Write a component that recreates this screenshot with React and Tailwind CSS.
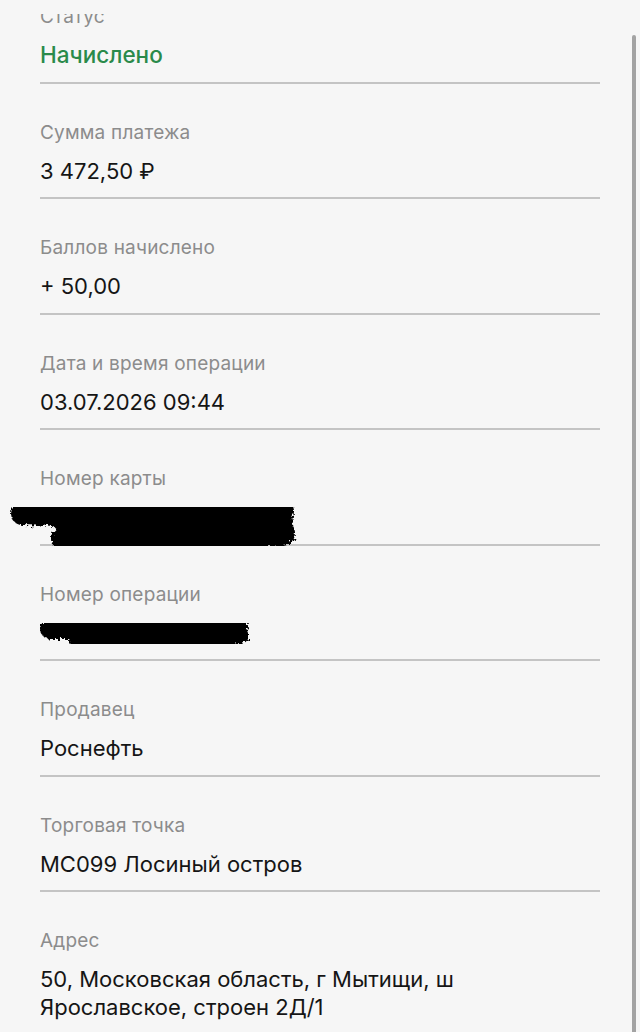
import React from 'react'

const rows = [
  { label: 'Статус', value: 'Начислено', green: true },
  { label: 'Сумма платежа', value: '3 472,50 ₽' },
  { label: 'Баллов начислено', value: '+ 50,00' },
  { label: 'Дата и время операции', value: '03.07.2026 09:44' },
  { label: 'Номер карты', scribble: 'card' },
  { label: 'Номер операции', scribble: 'op' },
  { label: 'Продавец', value: 'Роснефть' },
  { label: 'Торговая точка', value: 'MC099 Лосиный остров' },
  { label: 'Адрес', value: '50, Московская область, г Мытищи, ш Ярославское, строен 2Д/1' },
]

function Scribble({ kind }) {
  if (kind === 'card') {
    return (
      <svg className="absolute left-[-40px] top-[-16px]" width="300" height="80" viewBox="0 0 300 80">
        <defs>
          <filter id="rough1">
            <feTurbulence type="fractalNoise" baseFrequency="0.35" numOctaves="2" seed="3" />
            <feDisplacementMap in="SourceGraphic" scale="8" />
          </filter>
        </defs>
        <g filter="url(#rough1)" stroke="#050505" strokeLinecap="round" fill="none">
          <path d="M22 27 L60 28" strokeWidth="22" />
          <path d="M64 30 L200 28 L280 24" strokeWidth="28" />
          <path d="M64 52 L180 55 L282 46" strokeWidth="26" />
          <path d="M250 36 L284 34" strokeWidth="18" />
        </g>
      </svg>
    )
  }
  return (
    <svg className="absolute left-[-2px] top-[-10px]" width="220" height="52" viewBox="0 0 220 52">
      <defs>
        <filter id="rough2">
          <feTurbulence type="fractalNoise" baseFrequency="0.4" numOctaves="2" seed="7" />
          <feDisplacementMap in="SourceGraphic" scale="7" />
        </filter>
      </defs>
      <g filter="url(#rough2)" stroke="#050505" strokeLinecap="round" fill="none">
        <path d="M12 20 L120 20 L200 16" strokeWidth="20" />
        <path d="M40 32 L150 33 L202 26" strokeWidth="18" />
      </g>
    </svg>
  )
}

export default function App() {
  return (
    <div className="relative h-[1032px] overflow-hidden bg-[#f6f6f6]" style={{ fontFamily: 'Inter, "Noto Sans", sans-serif' }}>
      <div className="mt-[-34px] px-10">
        {rows.map((r, i) => (
          <div key={i} className={(i > 0 ? 'border-t-2 border-[#c4c4c4] ' : 'border-t-2 border-transparent ') + 'pt-[37px] pb-[12.5px]'}>
            <div className="text-[19px] leading-6 text-[#8c8c8c] tracking-[0.2px]">{r.label}</div>
            <div className="mt-[12px]">
              {r.scribble ? (
                <div className="relative h-7"><Scribble kind={r.scribble} /></div>
              ) : r.green ? (
                <div className="text-[22.5px] leading-7 font-medium text-[#2a8a4a]">{r.value}</div>
              ) : (
                <div className="text-[22px] leading-7 text-[#151515] pr-[120px]">{r.value}</div>
              )}
            </div>
          </div>
        ))}
      </div>
      <div className="absolute left-0 right-0 top-0 h-[14px] bg-[#f6f6f6]" />
      <div className="absolute right-[4px] top-[35px] w-[4px] h-[1000px] rounded-full bg-[#a3a3a3]" />
    </div>
  )
}
